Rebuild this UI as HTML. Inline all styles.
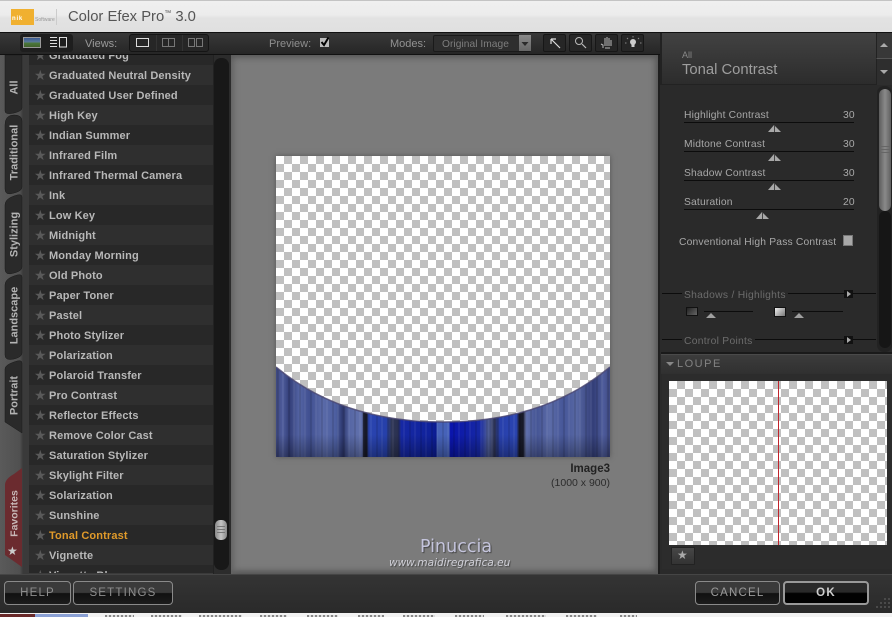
<!DOCTYPE html>
<html><head><meta charset="utf-8"><style>
html,body{margin:0;padding:0;width:892px;height:617px;overflow:hidden;background:#fff}
*{box-sizing:border-box}
body{font-family:"Liberation Sans",sans-serif;position:relative}
.a{position:absolute;white-space:nowrap}
.row{position:absolute;left:29px;width:184px;height:20px;line-height:22px;font-size:11px;font-weight:bold;color:#b8b8b8;padding-left:20px;letter-spacing:.13px}
.row i{position:absolute;left:5px;top:-1px;font-style:normal;font-weight:normal;color:#5a5a5a;font-size:14px}
.odd{background:#2f2f2f}.even{background:#282828}
.lab{position:absolute;font-size:10.3px;color:#a8a8a8;letter-spacing:.17px;line-height:13px}
.line{position:absolute;height:1px;background:#0c0c0c;border-bottom:0}
.chk{background:repeating-conic-gradient(#c0c0c0 0 25%,#fff 0 50%) 0 0/16px 16px}
.btn{position:absolute;top:581px;height:24px;border:1px solid #8a8a8a;border-radius:4px;background:linear-gradient(#3a3a3a 0,#3a3a3a 48%,#111 52%,#1c1c1c 100%);color:#8e8e8e;text-align:center;font-size:11.5px;line-height:22px;letter-spacing:1.2px;font-family:"Liberation Sans",sans-serif}
.tb{position:absolute;top:34px;width:23px;height:18px;background:#262626;border:1px solid #171717;border-radius:2px}
.tick{position:absolute;top:615px;height:2px;background:repeating-linear-gradient(90deg,#888 0 2px,#ddd 2px 4px)}
</style></head><body>
<!-- title bar -->
<div class="a" style="left:0;top:0;width:892px;height:32px;background:linear-gradient(#f0f0f0 0,#ececec 14px,#e2e2e2 17px,#e0e0e0 100%);border-top:1px solid #c4c4c4"></div>
<div class="a" style="left:11px;top:9px;width:23px;height:16px;background:#f0b030"></div>
<div class="a" style="left:12px;top:16px;font-size:6px;font-weight:bold;color:#fff;letter-spacing:.8px">nik</div>
<div class="a" style="left:35px;top:17px;font-size:5px;color:#999">Software</div>
<div class="a" style="left:56px;top:9px;width:1px;height:16px;background:#ccc"></div>
<div class="a" style="left:68px;top:8px;font-size:14.8px;color:#555;line-height:18px">Color Efex Pro<sup style="font-size:7px;line-height:0">™</sup> 3.0</div>

<!-- toolbar -->
<div class="a" style="left:0;top:32px;width:892px;height:23px;background:linear-gradient(#383838,#262626);border-top:1px solid #111;border-bottom:1px solid #111"></div>
<div class="a" style="left:20px;top:34px;width:53px;height:18px;background:#1e1e1e;border-radius:3px"></div>
<div class="a" style="left:23px;top:37px;width:18px;height:11px;background:linear-gradient(#3c5a90 0,#5a7a9a 45%,#4c7a3c 55%,#40602c);border:1px solid #999"></div>
<svg class="a" style="left:49px;top:36px" width="20" height="13"><g stroke="#ddd" fill="none"><path d="M1 1.500h7M1 4.500h7M1 7.500h7M1 10.500h7"/><rect x="10.500" y="1.500" width="7" height="9.500"/></g></svg>
<div class="a" style="left:85px;top:37px;font-size:11px;color:#9a9a9a;line-height:14px">Views:</div>
<div class="a" style="left:129px;top:34px;width:80px;height:18px;background:#262626;border:1px solid #151515;border-radius:3px"></div>
<svg class="a" style="left:130px;top:35px" width="78" height="16"><rect x="6.500" y="3.500" width="12" height="8" fill="none" stroke="#ddd"/><path d="M26.500 0v16M52.500 0v16" stroke="#333"/><g fill="none" stroke="#777"><rect x="32.500" y="3.500" width="12" height="8"/><path d="M38.500 3.500v8"/><rect x="58.500" y="3.500" width="6" height="8"/><rect x="66.500" y="3.500" width="6" height="8"/></g></svg>
<div class="a" style="left:269px;top:37px;font-size:11px;color:#8e8e8e;line-height:14px">Preview:</div>
<div class="a" style="left:320px;top:38px;width:9px;height:9px;background:#bbb"></div>
<svg class="a" style="left:319px;top:36px" width="12" height="12"><path d="M2.500 6l2.500 3L9.500 1.500" fill="none" stroke="#000" stroke-width="2"/></svg>
<div class="a" style="left:390px;top:37px;font-size:11px;color:#929292;line-height:14px">Modes:</div>
<div class="a" style="left:433px;top:35px;width:98px;height:17px;background:#2e2e2e;border:1px solid #1a1a1a;border-radius:2px"></div>
<div class="a" style="left:442px;top:37px;font-size:10.2px;color:#7e7e7e;line-height:15px;letter-spacing:.05px">Original Image</div>
<div class="a" style="left:519px;top:35px;width:12px;height:16px;background:linear-gradient(#8a8a8a,#666)"></div>
<svg class="a" style="left:519px;top:35px" width="12" height="16"><path d="M2.500 7h7L6 11z" fill="#2a2a2a"/></svg>
<div class="tb" style="left:543px"></div><div class="tb" style="left:569px"></div><div class="tb" style="left:595px"></div><div class="tb" style="left:621px"></div>
<svg class="a" style="left:543px;top:34px" width="102" height="18"><g fill="none" stroke="#ddd">
<path d="M8 5l9 9M8 5v5M8 5h5" stroke-width="1.200"/>
<circle cx="36" cy="7" r="3.500" stroke="#bbb"/><path d="M39 10l4 4" stroke-width="1.200" stroke="#bbb"/>
<path d="M60 14v-3l-2-1M62 12v-8M64 12v-9M66 12v-8M68 12v-6M62 14h5" stroke="#bbb"/>
<path d="M84 4l1 1M96 4l-1 1M82 9h1.500M97 9h1.500M90 2v1.500" stroke="#888"/></g><circle cx="90" cy="8" r="3" fill="#ccc"/><rect x="88.500" y="10" width="3" height="3" fill="#ccc"/></svg>

<!-- left tabs column -->
<div class="a" style="left:0;top:55px;width:29px;height:519px;background:linear-gradient(90deg,#5a5a5a 0,#505050 20px,#3a3a3a 23px,#3a3a3a 100%)"></div>
<svg class="a" style="left:0;top:55px" width="29" height="519">
<g fill="#2a2a2a" stroke="#1a1a1a" stroke-width=".5">
<path d="M22 0V53Q22 56 14 58 Q5 60 5 56V0z"/>
<path d="M5 70Q5 60 14 60 Q22 60 22 66V132Q22 136 14 138Q5 141 5 134z"/>
<path d="M5 150Q5 144 14 141 Q22 138 22 142V212Q22 216 14 218Q5 221 5 214z"/>
<path d="M5 230Q5 224 14 221 Q22 218 22 222V298Q22 302 14 304Q5 306 5 300z"/>
<path d="M5 314Q5 310 14 307 Q22 304 22 308V378L5 367z"/>
</g>
<path d="M5 430Q5 424 14 419 L22 413V512L5 500z" fill="#6b2b2f"/>
</svg>
<div class="a" style="left:-5px;top:81px;width:40px;text-align:center;font-size:11px;font-weight:bold;color:#b4b4b4;transform:rotate(-90deg);line-height:13px">All</div>
<div class="a" style="left:-20px;top:146px;width:70px;text-align:center;font-size:11px;font-weight:bold;color:#b4b4b4;transform:rotate(-90deg);line-height:13px">Traditional</div>
<div class="a" style="left:-20px;top:228px;width:70px;text-align:center;font-size:11px;font-weight:bold;color:#b4b4b4;transform:rotate(-90deg);line-height:13px">Stylizing</div>
<div class="a" style="left:-20px;top:309px;width:70px;text-align:center;font-size:11px;font-weight:bold;color:#b4b4b4;transform:rotate(-90deg);line-height:13px">Landscape</div>
<div class="a" style="left:-20px;top:389px;width:70px;text-align:center;font-size:11px;font-weight:bold;color:#b4b4b4;transform:rotate(-90deg);line-height:13px">Portrait</div>
<div class="a" style="left:-20px;top:507px;width:70px;text-align:center;font-size:10.5px;font-weight:bold;color:#c8b8b8;transform:rotate(-90deg);line-height:13px">Favorites</div>
<div class="a" style="left:7px;top:544px;font-size:12px;color:#ccc;line-height:14px">★</div>

<!-- list -->
<div class="a" style="left:29px;top:573px;width:184px;height:1px;background:#3a3a3a"></div>
<div class="a" style="left:29px;top:55px;width:184px;height:518px;overflow:hidden;background:#2b2b2b">
<div style="position:relative;left:-29px;top:-55px">
<div class="row even" style="top:45px"><i>★</i>Graduated Fog</div>
<div class="row odd" style="top:65px"><i>★</i>Graduated Neutral Density</div>
<div class="row even" style="top:85px"><i>★</i>Graduated User Defined</div>
<div class="row odd" style="top:105px"><i>★</i>High Key</div>
<div class="row even" style="top:125px"><i>★</i>Indian Summer</div>
<div class="row odd" style="top:145px"><i>★</i>Infrared Film</div>
<div class="row even" style="top:165px"><i>★</i>Infrared Thermal Camera</div>
<div class="row odd" style="top:185px"><i>★</i>Ink</div>
<div class="row even" style="top:205px"><i>★</i>Low Key</div>
<div class="row odd" style="top:225px"><i>★</i>Midnight</div>
<div class="row even" style="top:245px"><i>★</i>Monday Morning</div>
<div class="row odd" style="top:265px"><i>★</i>Old Photo</div>
<div class="row even" style="top:285px"><i>★</i>Paper Toner</div>
<div class="row odd" style="top:305px"><i>★</i>Pastel</div>
<div class="row even" style="top:325px"><i>★</i>Photo Stylizer</div>
<div class="row odd" style="top:345px"><i>★</i>Polarization</div>
<div class="row even" style="top:365px"><i>★</i>Polaroid Transfer</div>
<div class="row odd" style="top:385px"><i>★</i>Pro Contrast</div>
<div class="row even" style="top:405px"><i>★</i>Reflector Effects</div>
<div class="row odd" style="top:425px"><i>★</i>Remove Color Cast</div>
<div class="row even" style="top:445px"><i>★</i>Saturation Stylizer</div>
<div class="row odd" style="top:465px"><i>★</i>Skylight Filter</div>
<div class="row even" style="top:485px"><i>★</i>Solarization</div>
<div class="row odd" style="top:505px"><i>★</i>Sunshine</div>
<div class="row even" style="top:525px;color:#e09a2a"><i>★</i>Tonal Contrast</div>
<div class="row odd" style="top:545px"><i>★</i>Vignette</div>
<div class="row even" style="top:565px"><i>★</i>Vignette Blur</div>
</div></div>
<!-- list scrollbar -->
<div class="a" style="left:213px;top:55px;width:18px;height:519px;background:#2c2c2c;border-left:1px solid #222"></div>
<div class="a" style="left:214px;top:58px;width:15px;height:512px;background:#181818;border-radius:7px"></div>
<div class="a" style="left:215px;top:520px;width:12px;height:20px;background:linear-gradient(90deg,#888,#c4c4c4 50%,#888);border-radius:5px"></div>
<svg class="a" style="left:217px;top:525px" width="8" height="10"><path d="M0 1.500h8M0 4.500h8M0 7.500h8" stroke="#777"/></svg>

<!-- preview -->
<div class="a" style="left:231px;top:55px;width:427px;height:519px;background:#7b7b7b;box-shadow:inset 0 6px 6px -3px #5a5a5a,inset -6px 0 6px -3px #5c5c5c,inset 6px 0 6px -3px #666,inset 0 -6px 6px -3px #555"></div>
<div class="a chk" style="left:276px;top:156px;width:334px;height:301px;box-shadow:0 0 5px #555"></div>
<svg class="a" style="left:276px;top:156px" width="334" height="301">
<defs>
<linearGradient id="s" x1="0" x2="1" y1="0" y2="0">
<stop offset="0" stop-color="#3e4880"/><stop offset=".02" stop-color="#4e5c9c"/><stop offset=".04" stop-color="#333e78"/><stop offset=".07" stop-color="#5464a4"/><stop offset=".1" stop-color="#404f90"/><stop offset=".14" stop-color="#5a6aa8"/><stop offset=".18" stop-color="#4c5ea0"/><stop offset=".2" stop-color="#2c366c"/><stop offset=".22" stop-color="#5666a4"/><stop offset=".25" stop-color="#6070ac"/><stop offset=".258" stop-color="#6070ac"/><stop offset=".262" stop-color="#1a1c2c"/><stop offset=".272" stop-color="#1a1c2c"/><stop offset=".278" stop-color="#2a44b0"/><stop offset=".33" stop-color="#2640aa"/><stop offset=".345" stop-color="#303858"/><stop offset=".365" stop-color="#2a3050"/><stop offset=".375" stop-color="#1628a4"/><stop offset=".46" stop-color="#10229c"/><stop offset=".48" stop-color="#0a1a90"/><stop offset=".482" stop-color="#4662b8"/><stop offset=".518" stop-color="#4662b8"/><stop offset=".522" stop-color="#0a14ac"/><stop offset=".61" stop-color="#1628a4"/><stop offset=".635" stop-color="#505f98"/><stop offset=".655" stop-color="#2a3050"/><stop offset=".67" stop-color="#2840ac"/><stop offset=".72" stop-color="#2a44b0"/><stop offset=".728" stop-color="#181a28"/><stop offset=".74" stop-color="#181a28"/><stop offset=".75" stop-color="#6070ac"/><stop offset=".78" stop-color="#455494"/><stop offset=".82" stop-color="#5c6ca8"/><stop offset=".86" stop-color="#465698"/><stop offset=".9" stop-color="#5868a4"/><stop offset=".95" stop-color="#333e78"/><stop offset=".98" stop-color="#4e5c9c"/><stop offset="1" stop-color="#3e4880"/>
</linearGradient>
<linearGradient id="d" x1="0" x2="0" y1="0" y2="1"><stop offset=".75" stop-color="#000" stop-opacity="0"/><stop offset="1" stop-color="#000" stop-opacity=".3"/></linearGradient>
<pattern id="f" width="11" height="10" patternUnits="userSpaceOnUse"><rect width="2" height="10" x="1" fill="#000" opacity=".1"/><rect width="2" height="10" x="6" fill="#fff" opacity=".05"/></pattern>
</defs>
<path d="M0 211C49 252 109 266 167 266C225 266 285 252 334 211V301H0z" fill="url(#s)"/>
<path d="M0 211C49 252 109 266 167 266C225 266 285 252 334 211V301H0z" fill="url(#f)"/>
<path d="M0 211C49 252 109 266 167 266C225 266 285 252 334 211V301H0z" fill="url(#d)"/>
<path d="M0 211C49 252 109 266 167 266C225 266 285 252 334 211" fill="none" stroke="#4a4670" stroke-width="1.500" opacity=".8"/>
</svg>
<div class="a" style="right:282px;top:463px;font-size:11.500px;font-weight:bold;color:#222;line-height:13px">Image3</div>
<div class="a" style="right:282px;top:477px;font-size:10.500px;color:#2c2c2c;line-height:13px">(1000 x 900)</div>
<div class="a" style="left:420px;top:537px;font-family:'DejaVu Sans',sans-serif;font-size:17.500px;color:#c4c4dc;line-height:20px;text-shadow:1px 1px 1px #444">Pinuccia</div>
<div class="a" style="left:389px;top:557px;font-family:'DejaVu Sans',sans-serif;font-size:10.500px;font-style:italic;color:#d0d0d8;line-height:13px;text-shadow:1px 1px 1px #444">www.maidiregrafica.eu</div>

<!-- right panel -->
<div class="a" style="left:658px;top:55px;width:234px;height:519px;background:#2a2a2a;border-left:2px solid #1e1e1e"></div>
<div class="a" style="left:662px;top:33px;width:214px;height:52px;background:linear-gradient(#424242,#2c2c2c);border-bottom:1px solid #222"></div>
<div class="a" style="left:660px;top:33px;width:2px;height:52px;background:#222"></div>
<div class="a" style="left:682px;top:50px;font-size:9px;color:#888;line-height:11px">All</div>
<div class="a" style="left:682px;top:61px;font-size:14.800px;color:#9e9e9e;line-height:18px">Tonal Contrast</div>
<div class="a" style="left:876px;top:33px;width:16px;height:26px;background:#383838;border-left:1px solid #222;border-bottom:1px solid #555"></div>
<div class="a" style="left:876px;top:59px;width:16px;height:26px;background:#2e2e2e;border-left:1px solid #222"></div>
<svg class="a" style="left:876px;top:33px" width="16" height="52"><path d="M4 14l4-4 4 4zM4 37h8l-4 4z" fill="#aaa"/></svg>
<div class="a" style="left:877px;top:86px;width:15px;height:266px;background:#222;border-radius:7px"></div>
<div class="a" style="left:879px;top:89px;width:12px;height:122px;background:linear-gradient(90deg,#5c5c5c,#8a8a8a 50%,#606060);border-radius:6px"></div>
<svg class="a" style="left:881px;top:145px" width="9" height="10"><path d="M0 1.500h9M0 4.500h9M0 7.500h9" stroke="#666"/></svg>
<div class="a" style="left:879px;top:211px;width:12px;height:137px;background:#161616;border-radius:6px"></div>

<div class="lab" style="left:684px;top:109px">Highlight Contrast</div><div class="lab" style="left:843px;top:109px">30</div><div class="line" style="left:684px;top:122px;width:170px"></div>
<div class="lab" style="left:684px;top:138px">Midtone Contrast</div><div class="lab" style="left:843px;top:138px">30</div><div class="line" style="left:684px;top:151px;width:170px"></div>
<div class="lab" style="left:684px;top:167px">Shadow Contrast</div><div class="lab" style="left:843px;top:167px">30</div><div class="line" style="left:684px;top:180px;width:170px"></div>
<div class="lab" style="left:684px;top:196px">Saturation</div><div class="lab" style="left:843px;top:196px">20</div><div class="line" style="left:684px;top:209px;width:170px"></div>
<svg class="a" style="left:660px;top:120px" width="216" height="100"><g fill="#a8a8a8">
<path d="M108 12l6-7 7 7z"/><path d="M108 41l6-7 7 7z"/><path d="M108 70l6-7 7 7z"/><path d="M96 99l6-7 7 7z"/></g>
<path d="M114.500 5v7M114.500 34v7M114.500 63v7M102.500 92v7" stroke="#444"/></svg>
<div class="lab" style="left:679px;top:236px;letter-spacing:.18px">Conventional High Pass Contrast</div>
<div class="a" style="left:843px;top:235px;width:10px;height:11px;background:#a8a8a8;border:1px solid #777"></div>

<div class="line" style="left:662px;top:293px;width:214px"></div>
<div class="lab" style="left:682px;top:289px;background:#2a2a2a;padding:0 2px;color:#6c6c6c;letter-spacing:.28px">Shadows / Highlights</div>
<div class="a" style="left:844px;top:290px;width:9px;height:8px;background:#111"></div>
<svg class="a" style="left:844px;top:290px" width="9" height="8"><path d="M3 1l4 3-4 3z" fill="#aaa"/></svg>
<div class="a" style="left:686px;top:307px;width:12px;height:9px;background:linear-gradient(135deg,#222,#666);border:1px solid #111"></div>
<div class="a" style="left:774px;top:307px;width:12px;height:10px;background:linear-gradient(135deg,#eee,#777);border:1px solid #111"></div>
<div class="line" style="left:704px;top:311px;width:49px"></div><div class="line" style="left:792px;top:311px;width:51px"></div>
<svg class="a" style="left:700px;top:311px" width="110" height="8"><path d="M6 7l5-5 5 5zM94 7l5-5 5 5z" fill="#a0a0a0"/></svg>

<div class="line" style="left:662px;top:339px;width:214px"></div>
<div class="lab" style="left:682px;top:335px;background:#2a2a2a;padding:0 2px;color:#6c6c6c;letter-spacing:.28px">Control Points</div>
<div class="a" style="left:844px;top:336px;width:9px;height:8px;background:#111"></div>
<svg class="a" style="left:844px;top:336px" width="9" height="8"><path d="M3 1l4 3-4 3z" fill="#aaa"/></svg>

<div class="a" style="left:661px;top:352px;width:231px;height:2px;background:#1a1a1a"></div>
<div class="a" style="left:661px;top:354px;width:231px;height:20px;background:linear-gradient(#3c3c3c,#303030);border-top:1px solid #4a4a4a"></div>
<svg class="a" style="left:665px;top:360px" width="10" height="8"><path d="M1 2h8L5 6z" fill="#888"/></svg>
<div class="a" style="left:677px;top:358px;font-size:11px;color:#828282;letter-spacing:1.500px;line-height:13px">LOUPE</div>
<div class="a" style="left:662px;top:374px;width:230px;height:195px;background:#2c2c2c"></div>
<div class="a chk" style="left:669px;top:381px;width:218px;height:164px"></div>
<div class="a" style="left:778px;top:381px;width:1px;height:164px;background:#c0242c"></div>
<div class="a" style="left:671px;top:547px;width:24px;height:18px;background:linear-gradient(#474747,#333);border:1px solid #222;border-radius:1px"></div>
<div class="a" style="left:677px;top:548px;font-size:12px;color:#aaa;line-height:15px">★</div>

<!-- bottom bar -->
<div class="a" style="left:0;top:574px;width:892px;height:39px;background:linear-gradient(#343434,#2a2a2a);border-top:1px solid #454545"></div>
<div class="btn" style="left:4px;width:67px">HELP</div>
<div class="btn" style="left:73px;width:100px">SETTINGS</div>
<div class="btn" style="left:695px;width:85px;color:#9a9a9a">CANCEL</div>
<div class="btn" style="left:783px;width:86px;border:2px solid #999;background:linear-gradient(#2a2a2a 0,#2a2a2a 45%,#020202 52%,#020202 100%);color:#cfcfcf;font-weight:bold;line-height:21px">OK</div>
<svg class="a" style="left:872px;top:596px" width="20" height="16"><g fill="#4a4a4a"><rect x="12" y="2" width="2" height="2"/><rect x="16" y="2" width="2" height="2"/><rect x="8" y="6" width="2" height="2"/><rect x="12" y="6" width="2" height="2"/><rect x="16" y="6" width="2" height="2"/><rect x="4" y="10" width="2" height="2"/><rect x="8" y="10" width="2" height="2"/><rect x="12" y="10" width="2" height="2"/><rect x="16" y="10" width="2" height="2"/></g></svg>
<div class="a" style="left:0;top:613px;width:892px;height:4px;background:#f2f2f2"></div>
<div class="a" style="left:0;top:614px;width:35px;height:3px;background:#6a2a2a"></div>
<div class="a" style="left:35px;top:614px;width:53px;height:3px;background:#8aa0d4"></div>
<div class="tick" style="left:105px;width:29px"></div><div class="tick" style="left:151px;width:31px"></div><div class="tick" style="left:199px;width:43px"></div><div class="tick" style="left:260px;width:27px"></div><div class="tick" style="left:307px;width:31px"></div><div class="tick" style="left:358px;width:26px"></div><div class="tick" style="left:403px;width:32px"></div><div class="tick" style="left:455px;width:29px"></div><div class="tick" style="left:506px;width:40px"></div><div class="tick" style="left:566px;width:31px"></div><div class="tick" style="left:620px;width:17px"></div>
</body></html>
